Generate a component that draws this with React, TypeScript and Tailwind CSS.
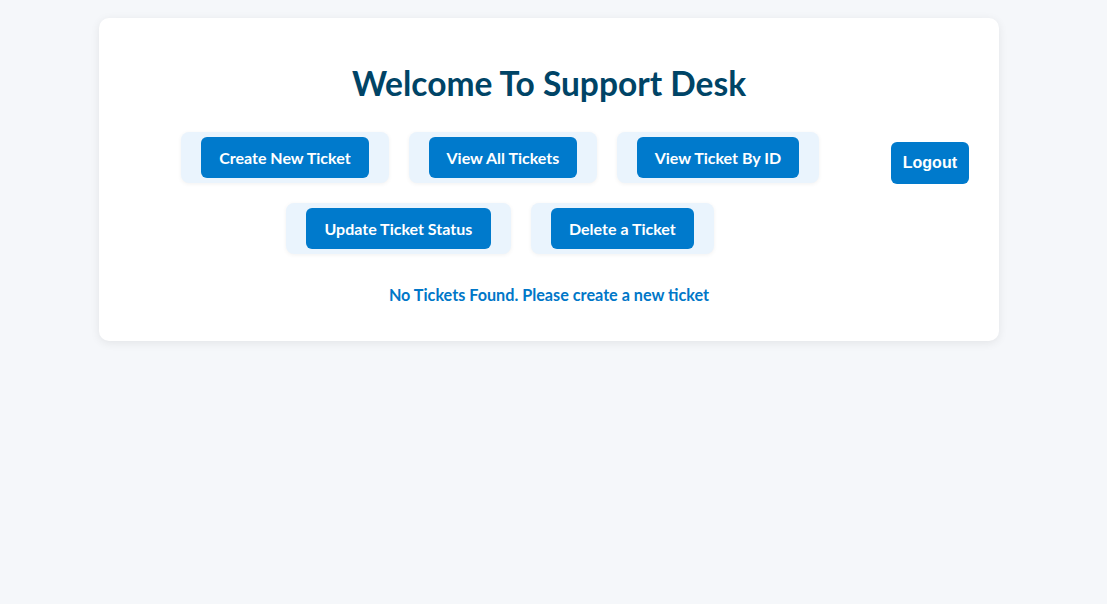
import React from "react";

const navItems = [
  { label: "Create New Ticket", w: "w-[168px]" },
  { label: "View All Tickets", w: "w-[148px]" },
  { label: "View Ticket By ID", w: "w-[162px]" },
  { label: "Update Ticket Status", w: "w-[185px]" },
  { label: "Delete a Ticket", w: "w-[143px]" },
];

export default function App() {
  return (
    <div className="min-h-screen w-full bg-[#f5f7fa] pt-[18px] pr-[9px] font-['Lato','Noto_Sans',sans-serif]">
      <div className="mx-auto w-[900px] rounded-[10px] bg-white px-[30px] pt-[30px] pb-[35px] shadow-[0_2px_10px_rgba(0,0,0,0.08)]">
        <h1 className="mt-[14px] mb-[28px] text-center text-[33.5px] leading-[42px] font-bold text-[#004466]">
          Welcome To Support Desk
        </h1>
        <div className="flex items-start gap-[20px]">
          <div className="flex flex-1 flex-wrap justify-center gap-[20px]">
            {navItems.map((item) => (
              <div
                key={item.label}
                className="rounded-[8px] bg-[#eaf4fd] px-[20px] py-[5px] shadow-[0_1px_4px_rgba(0,0,0,0.06)]"
              >
                <button
                  className={`${item.w} h-[41px] rounded-[6px] bg-[#007acc] text-center text-[16px] font-bold text-white`}
                >
                  {item.label}
                </button>
              </div>
            ))}
          </div>
          <button className="mt-[10px] rounded-[6px] bg-[#007acc] px-[12px] py-[12px] font-['Liberation_Sans',Arial,sans-serif] text-[16px] leading-[18px] font-bold text-white">
            Logout
          </button>
        </div>
        <p className="mt-[30px] text-center text-[16.2px] leading-[22px] font-bold text-[#0077c8]">
          No Tickets Found. Please create a new ticket
        </p>
      </div>
    </div>
  );
}
